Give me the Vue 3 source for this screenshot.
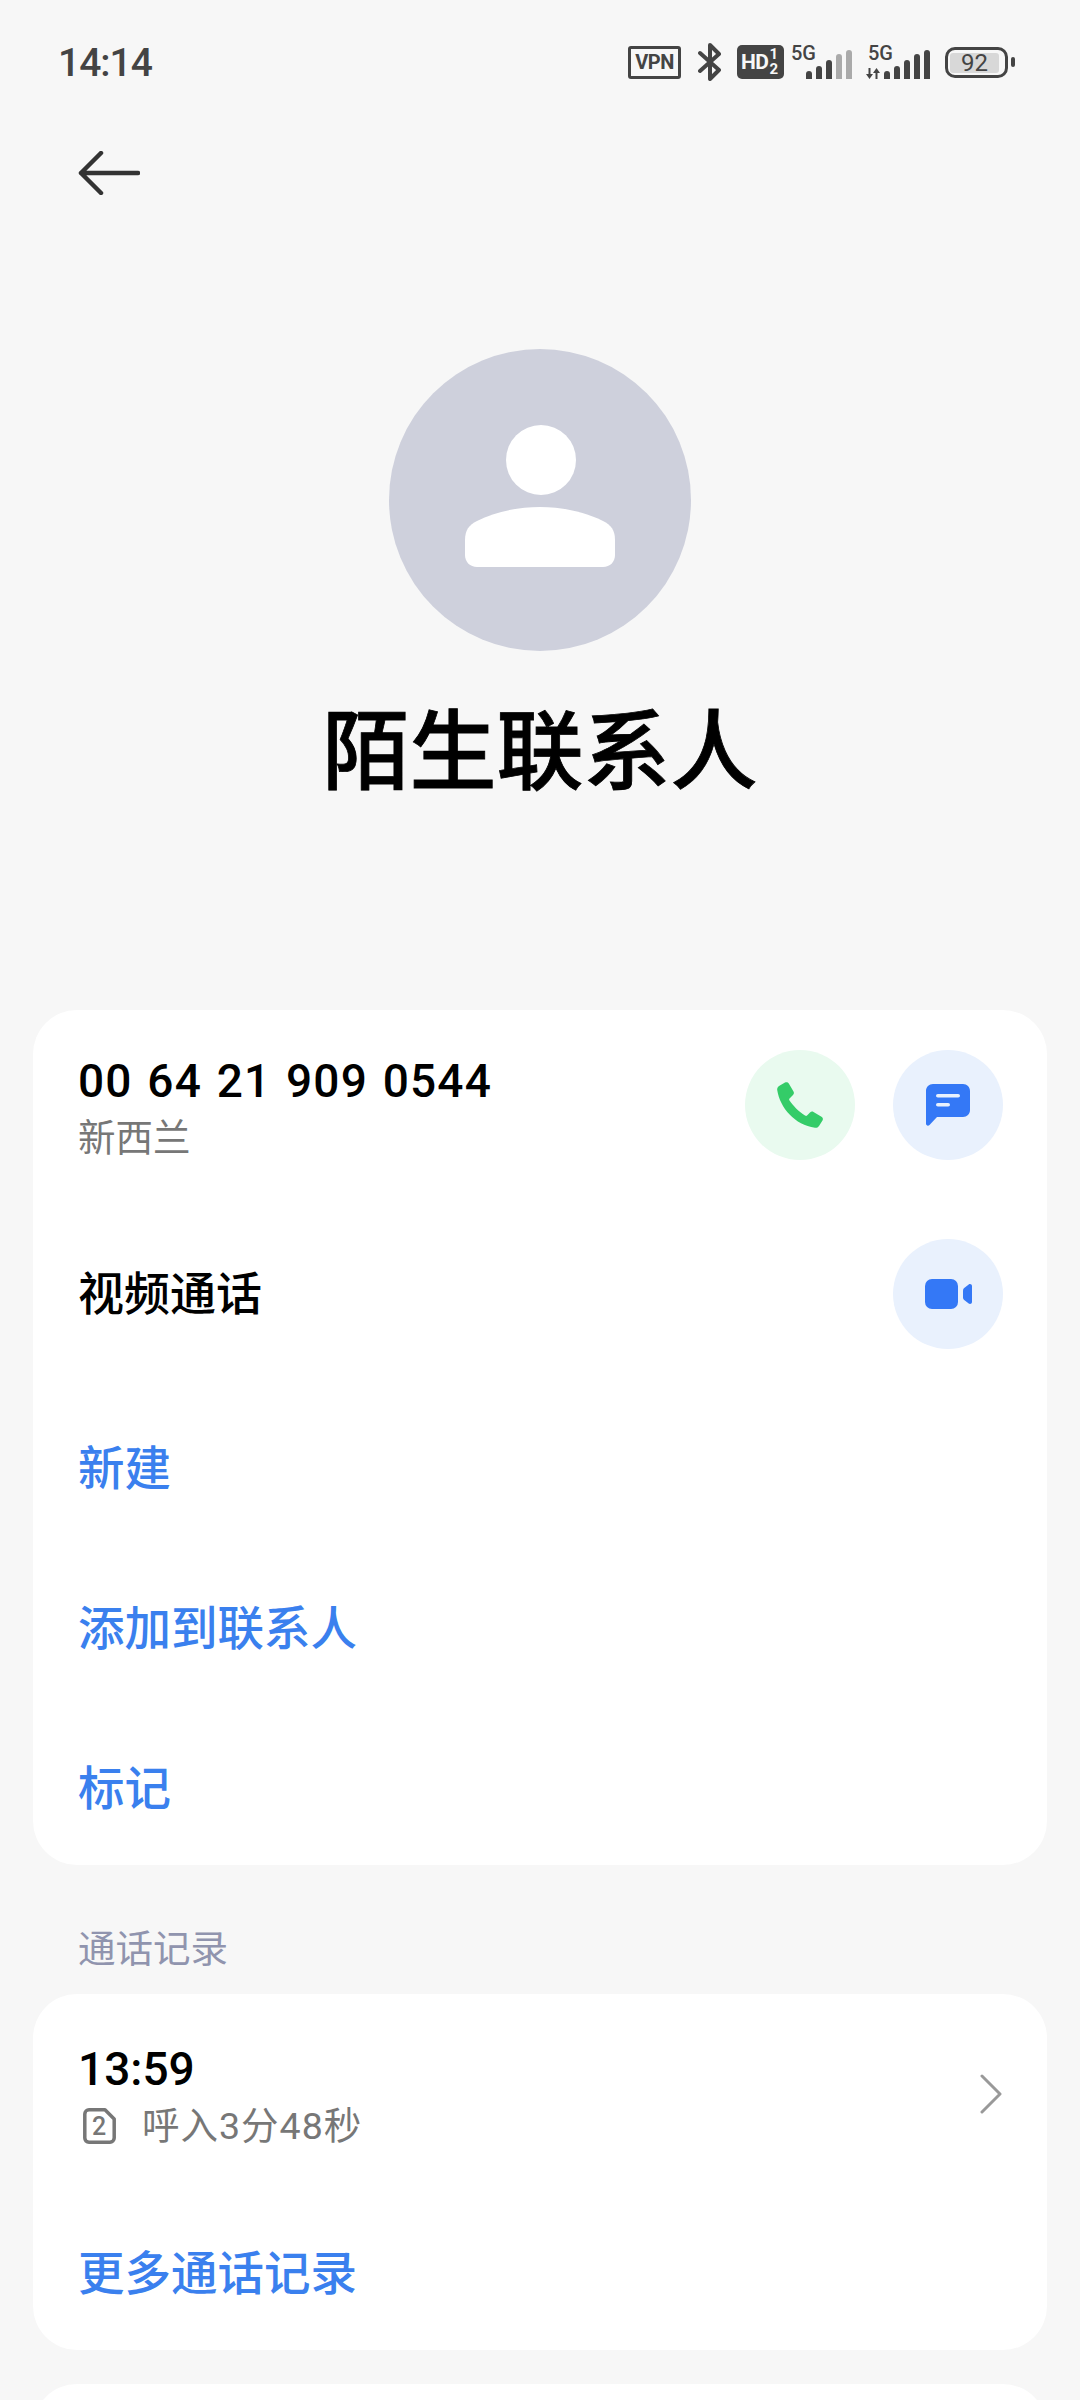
<template>
  <div class="page">
    <div class="status-bar">
      <span class="clock">14:14</span>
      <div class="status-icons">
        <span class="vpn">VPN</span>
        <svg class="bt" width="24" height="38" viewBox="0 0 24 38" fill="none" stroke="#444" stroke-width="4" stroke-linejoin="round" stroke-linecap="round">
          <path d="M2 10 21 27 12 36V2l9 9L2 28" />
        </svg>
        <span class="hd">HD<span class="hd-sims"><i>1</i><i>2</i></span></span>
        <div class="signal">
          <span class="five-g">5G</span>
          <span class="bars">
            <i v-for="b in bars1" :key="b.h" :class="{ dim: b.dim }" :style="{ height: b.h + 'px' }" />
          </span>
        </div>
        <div class="signal second">
          <span class="five-g">5G</span>
          <span class="bars">
            <svg width="14" height="11" viewBox="0 0 14 11" fill="#444"><path d="M2.500 0h2v6H7l-3.500 5L0 6h2.500zM9.500 11h2V5H14L10.500 0 7 5h2.500z" /></svg>
            <i v-for="b in bars2" :key="b" :style="{ height: b + 'px' }" />
          </span>
        </div>
        <div class="battery">
          <div class="battery-body"><span class="battery-level">92</span></div>
          <i class="battery-tip" />
        </div>
      </div>
    </div>

    <div class="toolbar">
      <svg width="62" height="44" viewBox="0 0 62 44" fill="none" stroke="#333" stroke-width="4.500" stroke-linecap="round" stroke-linejoin="round">
        <path d="M60 22H3M23 2 3 22l20 20" />
      </svg>
    </div>

    <div class="hero">
      <div class="avatar">
        <svg width="150" height="142" viewBox="0 0 150 142" fill="#fff">
          <circle cx="76" cy="35" r="35" />
          <path d="M0 115c0-10 4-15 12-19 18-9 40-14 63-14s45 5 63 14c8 4 12 9 12 19v15c0 7-5 12-12 12H12c-7 0-12-5-12-12z" />
        </svg>
      </div>
      <h1 class="name">陌生联系人</h1>
    </div>

    <section class="card actions">
      <div class="row number-row">
        <div class="number-text">
          <div class="title number">00 64 21 909 0544</div>
          <div class="sub">新西兰</div>
        </div>
        <div class="btns">
          <button class="round green">
            <svg width="46" height="46" viewBox="0 0 46 46" fill="#34cc68">
              <path d="M2 4 8 .6C9.500-.2 11 .3 11.800 1.600L16.500 9.500C17.200 10.800 17 12 16 13L12.500 16.500C12 17 12 17.700 12.500 18.500 15.500 23 22 30 28 33.500 28.800 34 29.500 34 30 33.500L33 30.500C34 29.500 35.300 29.300 36.500 30L44.500 34.800C45.800 35.600 46.300 37 45.500 38.500L42 44C41 45.500 39.500 46 38 45.800 18 43 3 26 .2 8 0 6.500.7 4.800 2 4Z" />
            </svg>
          </button>
          <button class="round blue">
            <svg width="44" height="42" viewBox="0 0 44 42" fill="#3478f6">
              <path d="M7 0h30c4 0 7 3 7 7v19c0 4-3 7-7 7H11L3.500 41C2 42.300 0 41.500 0 39.500V7c0-4 3-7 7-7z" />
              <rect x="10" y="10" width="24" height="3.600" rx="1.800" fill="#e9f1fd" />
              <rect x="10" y="19" width="14" height="3.600" rx="1.800" fill="#e9f1fd" />
            </svg>
          </button>
        </div>
      </div>
      <div class="row video-row">
        <div class="title">视频通话</div>
        <button class="round blue">
          <svg width="47" height="30" viewBox="0 0 47 30" fill="#3478f6">
            <rect width="33" height="30" rx="7" />
            <path d="M38 11.500c0-1 .5-1.800 1.200-2.400l4.500-3.600C45 4.500 47 5.300 47 7v16c0 1.700-2 2.500-3.300 1.500l-4.500-3.600c-.7-.6-1.200-1.400-1.200-2.400z" />
          </svg>
        </button>
      </div>
      <div v-for="a in actions" :key="a" class="row link-row">{{ a }}</div>
    </section>

    <div class="section-label">通话记录</div>

    <section class="card log">
      <div class="row log-row">
        <div>
          <div class="title">13:59</div>
          <div class="sub log-sub">
            <svg width="33" height="36" viewBox="0 0 33 36" fill="none" stroke="#777" stroke-width="3.500">
              <path d="M6 1.800h16l9.200 9.200v19c0 2.500-2 4.200-4.200 4.200H6c-2.500 0-4.200-2-4.200-4.200V6c0-2.500 2-4.200 4.200-4.200z" stroke-linejoin="round" />
              <text x="16.500" y="27" text-anchor="middle" class="sim-no">2</text>
            </svg>
            <span>呼入3分48秒</span>
          </div>
        </div>
        <svg width="24" height="40" viewBox="0 0 24 40" fill="none" stroke="#999" stroke-width="3" stroke-linecap="round" stroke-linejoin="round">
          <path d="M3 2l18 18L3 38" />
        </svg>
      </div>
      <div class="row link-row more">更多通话记录</div>
    </section>

    <section class="card last" />
  </div>
</template>

<script setup>
const bars1 = [
  { h: 8, dim: false },
  { h: 13, dim: false },
  { h: 19, dim: false },
  { h: 25, dim: true },
  { h: 29, dim: true },
]
const bars2 = [8, 13, 19, 25, 29]
const actions = ['新建', '添加到联系人', '标记']
</script>

<style>
html, body { background: #f7f7f7; }
</style>

<style scoped>
.page {
  width: 1080px;
  height: 2400px;
  overflow: hidden;
  background: #f7f7f7;
  font-family: Roboto, "Noto Sans CJK SC", sans-serif;
  color: #000;
}

.status-bar {
  height: 125px;
  padding: 43px 65px 0 58px;
  box-sizing: border-box;
  display: flex;
  justify-content: space-between;
  align-items: flex-start;
}
.clock { font-size: 39px; line-height: 40px; font-weight: 500; color: #444; letter-spacing: -1px; }
.status-icons { display: flex; align-items: flex-start; height: 38px; color: #444; }
.vpn {
  width: 53px; height: 33px; box-sizing: border-box; margin: 3px 17px 0 0;
  border: 3px solid #444; border-radius: 3px;
  font-size: 20px; line-height: 27px; font-weight: 700; text-align: center; letter-spacing: -.5px;
}
.bt { margin: 0 15px 0 0; }
.hd {
  width: 47px; height: 34px; margin: 2px 7px 0 0; border-radius: 5px; background: #444; color: #f7f7f7;
  font-size: 21px; line-height: 34px; font-weight: 700; padding-left: 4px; box-sizing: border-box; display: flex;
  overflow: hidden; letter-spacing: -.5px;
}
.hd-sims { display: flex; flex-direction: column; font-size: 15px; line-height: 15px; padding: 2px 0 0 1px; }
.hd-sims i { font-style: normal; }
.signal { position: relative; width: 61px; height: 38px; margin-right: 13px; }
.signal.second { width: 65px; margin-right: 15px; }
.five-g { position: absolute; left: 0; top: 1px; font-size: 20px; line-height: 18px; font-weight: 500; }
.second .five-g { left: 3px; }
.bars { position: absolute; right: 0; bottom: 2px; display: flex; align-items: flex-end; gap: 4px; }
.bars i { width: 6px; border-radius: 3px 3px 0 0; background: #444; }
.bars i.dim { background: #aaa; }
.battery { display: flex; align-items: center; height: 38px; gap: 3px; }
.battery-body {
  width: 63px; height: 31px; box-sizing: border-box; padding: 2px;
  border: 3px solid #444; border-radius: 10px;
}
.battery-level {
  display: block; width: 49px; height: 20px; margin-top: 1px; border-radius: 3px; background: #d8d8d8;
  font-size: 24px; line-height: 20px; text-align: center; color: #444;
}
.battery-tip { width: 4px; height: 10px; border-radius: 2px; background: #444; }

.toolbar { height: 224px; padding: 26px 0 0 78px; box-sizing: border-box; }

.hero { height: 661px; display: flex; flex-direction: column; align-items: center; }
.avatar {
  width: 302px; height: 302px; border-radius: 50%; background: #ced0dc;
  display: flex; align-items: center; justify-content: center;
}
.avatar svg { margin-bottom: 8px; }
.name { margin: 38px 0 0; font-size: 87px; line-height: 128px; font-weight: 500; -webkit-text-stroke: .8px #000; }

.card { margin: 0 33px; background: #fff; border-radius: 44px; box-sizing: border-box; }
.actions { height: 855px; padding: 0 44px 0 45px; }
.row { display: flex; align-items: center; justify-content: space-between; }
.title { font-size: 46px; line-height: 62px; font-weight: 500; }
.number { letter-spacing: 1.200px; word-spacing: 2px; }
.number-text { margin-top: 3px; }
.sub { font-size: 37.500px; line-height: 50px; color: #777; }
.number-text .sub { margin-top: 1px; }
.number-row { height: 190px; }
.btns { display: flex; gap: 38px; }
.round {
  width: 110px; height: 110px; border: 0; padding: 0; border-radius: 50%;
  display: flex; align-items: center; justify-content: center;
}
.green { background: #e9faef; }
.blue { background: #e9f1fd; }
.video-row { height: 184px; box-sizing: border-box; padding-top: 3px; }
.link-row { height: 160px; font-size: 46.500px; font-weight: 500; color: #3a80ee; }

.section-label {
  height: 129px; padding: 59px 0 0 78px; box-sizing: border-box;
  font-size: 37.500px; line-height: 50px; color: #9094ae;
}

.log { height: 356px; padding: 0 44px 0 45px; }
.log-row { height: 200px; }
.log-sub { display: flex; align-items: center; gap: 26px; margin: 1px 0 0 5px; letter-spacing: 1px; }
.sim-no { font-size: 25px; font-weight: 500; fill: #777; stroke: none; }
.more { height: 151px; }
.last { margin-top: 34px; height: 300px; }
</style>
